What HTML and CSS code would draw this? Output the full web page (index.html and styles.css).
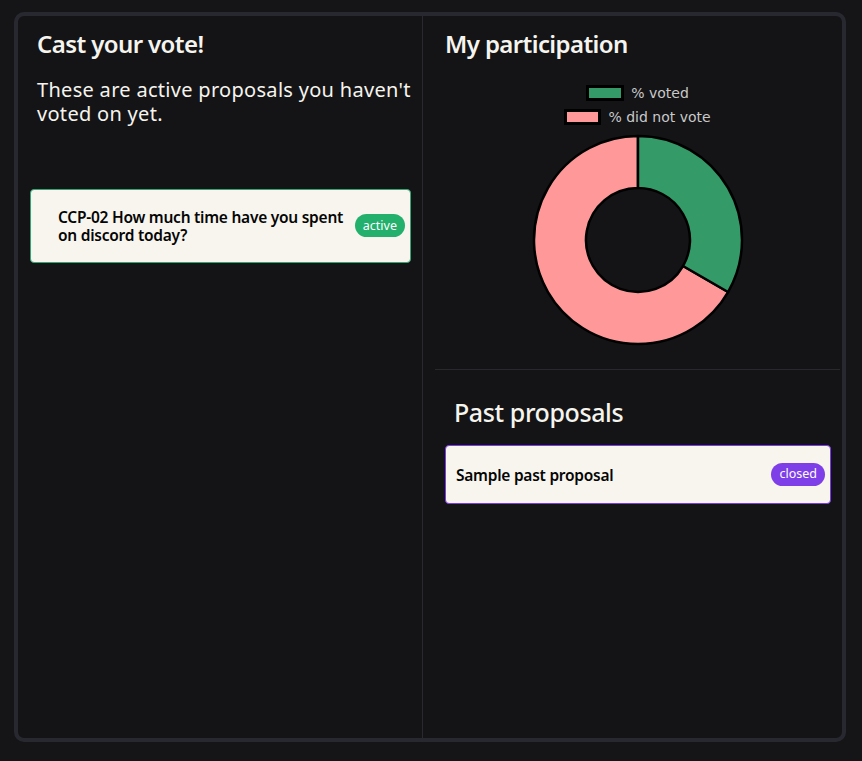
FILE: index.html
```html
<!DOCTYPE html>
<html lang="en">
<head>
<meta charset="utf-8">
<title>Proposals</title>
<link rel="stylesheet" href="styles.css">
</head>
<body>
<main class="board">
  <section class="col col-left">
    <h1 class="title">Cast your vote!</h1>
    <p class="lead">These are active proposals you haven't voted on yet.</p>
    <div class="proposal proposal-active">
      <div class="proposal-text">CCP-02 How much time have you spent on discord today?</div>
      <span class="badge badge-active">active</span>
    </div>
  </section>
  <section class="col col-right">
    <div class="participation">
      <h1 class="title">My participation</h1>
      <div class="legend">
        <div class="legend-row"><span class="swatch swatch-voted"></span><span class="legend-label">% voted</span></div>
        <div class="legend-row"><span class="swatch swatch-not"></span><span class="legend-label">% did not vote</span></div>
      </div>
      <div class="chart">
        <svg width="214" height="214" viewBox="-1 -1 214 214" aria-label="participation chart">
          <path class="slice-not" d="M196.07 158 A104 104 0 1 1 106 2 L106 54 A52 52 0 1 0 151.03 132 Z"/>
          <path class="slice-voted" d="M106 2 A104 104 0 0 1 196.07 158 L151.03 132 A52 52 0 0 0 106 54 Z"/>
        </svg>
      </div>
    </div>
    <div class="past">
      <h2 class="past-title">Past proposals</h2>
      <div class="proposal proposal-closed">
        <div class="proposal-text">Sample past proposal</div>
        <span class="badge badge-closed">closed</span>
      </div>
    </div>
  </section>
</main>
</body>
</html>
```

FILE: styles.css
```css
html, body {
  margin: 0;
  padding: 0;
  background: #151518;
}

body {
  font-family: "Noto Sans", "Open Sans", sans-serif;
  color: #f6f4ee;
}

.board {
  box-sizing: border-box;
  width: 832px;
  height: 730px;
  margin: 12px 0 0 14px;
  border: 4px solid #282930;
  border-radius: 10px;
  background: #141417;
  display: grid;
  grid-template-columns: 405px 1fr;
}

.col-left {
  border-right: 1px solid #29292f;
  padding: 0 11px 0 12px;
}

.title {
  margin: 14px 0 0 7px;
  font-size: 24px;
  line-height: 28.8px;
  font-weight: 600;
  letter-spacing: -0.6px;
}

.lead {
  margin: 19px 0 0 7px;
  font-size: 20px;
  line-height: 24px;
  font-weight: 400;
  letter-spacing: 0.3px;
}

.proposal {
  display: flex;
  align-items: center;
  background: #f8f5ee;
  border-radius: 4px;
  color: #050505;
  box-sizing: border-box;
}

.proposal-text {
  flex: 1;
  font-size: 15.5px;
  line-height: 18px;
  font-weight: 600;
  letter-spacing: -0.25px;
}

.proposal-active {
  margin-top: 63px;
  border: 1px solid #2fa874;
  padding: 18px 5px 18px 27px;
}

.proposal-active .proposal-text {
  padding-right: 6px;
}

.badge {
  display: inline-flex;
  align-items: center;
  height: 23px;
  padding: 0 8px;
  border-radius: 12px;
  color: #fff;
  font-size: 12.5px;
  line-height: 1;
}

.badge-active {
  background: #22b06c;
}

.badge-closed {
  background: #7e3ee8;
}

.col-right {
  padding: 0 2px 0 12px;
}

.participation .title {
  margin-left: 10px;
}

.legend {
  margin-top: 22px;
  display: flex;
  flex-direction: column;
  align-items: center;
  font-family: "DejaVu Sans", sans-serif;
  font-size: 14px;
  color: #c9c9c9;
}

.legend-row {
  height: 24px;
  display: flex;
  align-items: center;
  gap: 7px;
}

.swatch {
  box-sizing: border-box;
  width: 38px;
  height: 16px;
  border: 3px solid #000;
}

.swatch-voted {
  background: #339a68;
}

.swatch-not {
  width: 37px;
  background: #ff9999;
}

.chart {
  margin-top: 4px;
  display: flex;
  justify-content: center;
}

.chart svg {
  display: block;
}

.slice-voted {
  fill: #339a68;
  stroke: #000;
  stroke-width: 2.5;
  stroke-linejoin: round;
}

.slice-not {
  fill: #ff9999;
  stroke: #000;
  stroke-width: 2.5;
  stroke-linejoin: round;
}

.past {
  margin-top: 22px;
  border-top: 1px solid #28282d;
  padding: 0 9px 0 10px;
}

.past-title {
  margin: 27px 0 0 9px;
  font-size: 25px;
  line-height: 31.2px;
  font-weight: 500;
  letter-spacing: -0.4px;
}

.proposal-closed {
  margin-top: 17px;
  border: 1px solid #7c3aed;
  padding: 17px 5px 17px 10px;
}
```
